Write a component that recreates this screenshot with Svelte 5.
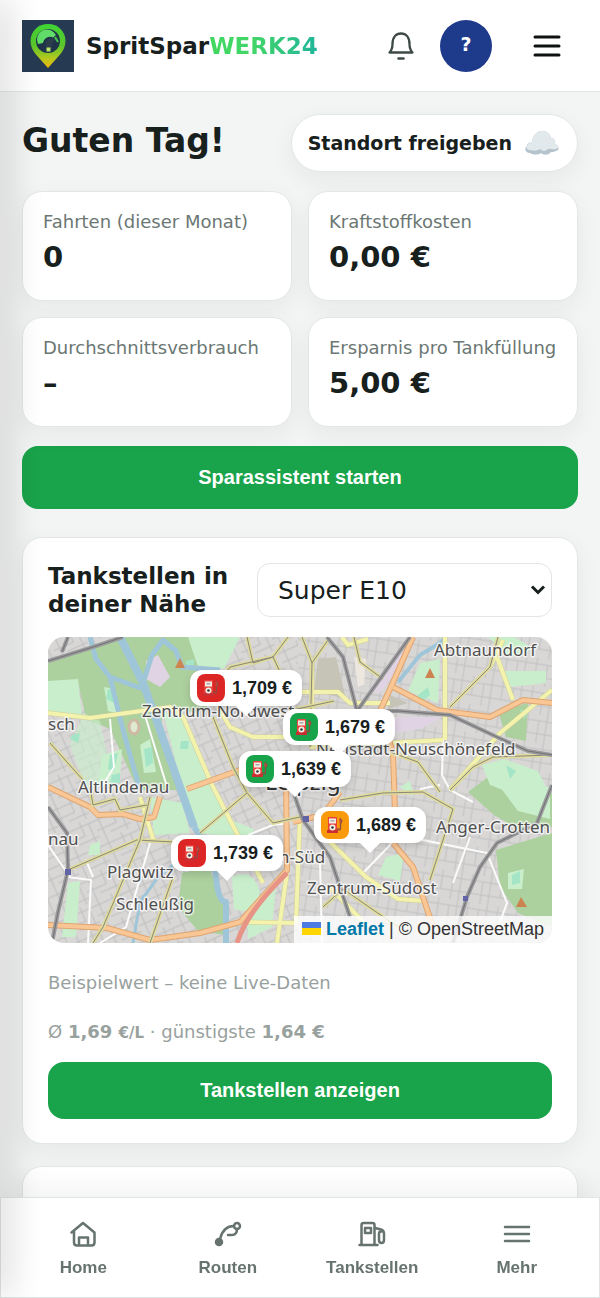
<script lang="ts">
	type Level = 'low' | 'mid' | 'high';

	const stats = [
		{ label: 'Fahrten (dieser Monat)', value: '0' },
		{ label: 'Kraftstoffkosten', value: '0,00 €' },
		{ label: 'Durchschnittsverbrauch', value: '–' },
		{ label: 'Ersparnis pro Tankfüllung', value: '5,00 €' }
	];

	// Pin tips, in the coordinate space of the map drawing
	const MAP_WIDTH = 504;
	const MAP_HEIGHT = 306;
	const stations: { price: string; level: Level; x: number; y: number }[] = [
		{ price: '1,709 €', level: 'high', x: 198, y: 79 },
		{ price: '1,679 €', level: 'low', x: 291, y: 118 },
		{ price: '1,639 €', level: 'low', x: 247, y: 160 },
		{ price: '1,689 €', level: 'mid', x: 322, y: 216 },
		{ price: '1,739 €', level: 'high', x: 179, y: 244 }
	];

	const fuels = ['Super E10', 'Super E5', 'Diesel'];
	let fuel = $state('Super E10');

	const rivers = [
		{ d: 'M72 0 95 46 112 93 132 150 146 190', w: 8 },
		{ d: 'M42 0 48 22 62 40 95 52M62 40 75 93 92 153', w: 5 },
		{ d: 'M95 46 104 18 115 3 128 14 134 30 172 33', w: 5 },
		{ d: 'M146 190Q166 215 168 240T178 265V306', w: 6 },
		{ d: 'M85 306 92 265 108 243 128 225', w: 3 },
		{ d: 'M350 45 372 18 392 6 398 0', w: 4 }
	];

	const mainRoads = [
		'M0 150 42 170 50 178 75 177 92 182 106 180 112 160',
		'M0 288 59 291 102 303 152 296 192 285 239 233 238 143',
		'M365 0 342 52 332 74 345 116 347 176M345 206 365 230 375 260 385 290',
		'M345 50 389 73 442 80 475 63 504 66',
		'M245 130 192 133 139 152M245 185 275 178 292 155'
	];

	const yellowRoads = [
		'M0 76 42 81 122 70 135 80 165 150 182 183 215 246',
		'M170 70 182 90 205 100 239 100 262 92',
		'M239 236 229 306M189 285 250 286M252 178 248 286',
		'M242 55H290L302 66 342 66M264 26V73',
		'M397 0V103M449 20 465 63M442 30 455 3',
		'M282 205 318 240 350 262 378 264M282 250 320 290',
		'M402 153 452 96 504 53M262 110 340 106 395 103',
		'M92 160 106 205M294 0 300 8 320 2'
	];

	const tramLines = [
		'M2 106 35 143M165 80 185 130 199 156 225 186 252 180',
		'M152 196 199 156M20 233 89 203 125 205',
		'M102 160 92 203 55 290 45 306M125 240 102 306',
		'M199 0 205 26 225 20 242 56M225 20 240 0M225 20 182 30 172 44',
		'M254 0 264 26 280 3M306 0 312 25 335 42M264 26 262 110',
		'M292 163 335 156 375 155 405 172 382 243',
		'M402 70 442 30 450 0M402 153 425 130 445 120 504 118',
		'M42 150 45 168 67 162 72 173 99 168M286 64 240 74',
		'M275 270 295 252 350 290M342 115 370 125 392 155'
	];

	const whiteRoads = [
		'M62 82 66 130 52 153M96 75 120 153',
		'M342 200 375 203 439 216 459 266 452 285',
		'M422 200 405 246M315 236 345 205',
		'M0 208 22 240M20 240 43 243 40 306M45 240 38 223M102 206 78 290 52 306',
		'M395 103 394 138 402 153 425 165M372 152 392 148',
		'M200 198 225 188 242 186M272 225 274 306'
	];

	const rails = [
		'M279 0 295 20 309 74 362 0',
		'M309 74 350 74 402 78 449 100 480 114 504 118',
		'M0 24 45 10 75 0M14 15 20 0',
		'M0 170 19 196 20 233 10 275 4 306',
		'M240 140 255 183 282 220 302 280',
		'M504 148 489 186 449 206 432 230 419 260 405 306'
	];

	const labels = [
		{ text: 'Abtnaundorf', x: 386, y: 19 },
		{ text: 'Zentrum-Nordwest', x: 94, y: 80 },
		{ text: 'sch', x: 0, y: 93 },
		{ text: 'Neustadt-Neuschönefeld', x: 268, y: 118 },
		{ text: 'Altlindenau', x: 30, y: 156 },
		{ text: 'nau', x: 0, y: 208 },
		{ text: 'Anger-Crotten', x: 388, y: 196 },
		{ text: 'Zentrum-Süd', x: 172, y: 226 },
		{ text: 'Plagwitz', x: 59, y: 241 },
		{ text: 'Zentrum-Südost', x: 259, y: 257 },
		{ text: 'Schleußig', x: 68, y: 273 }
	];
</script>

<div class="page">
	<header class="topbar">
		<a class="brand" href="#home">
			<svg class="logo" viewBox="0 0 52 52" aria-hidden="true">
				<defs>
					<linearGradient id="pin" x1="0" y1="0" x2="0" y2="1">
						<stop offset="0" stop-color="#3fd435" />
						<stop offset="0.5" stop-color="#5bc62c" />
						<stop offset="0.8" stop-color="#b9c81d" />
						<stop offset="1" stop-color="#f3b30b" />
					</linearGradient>
				</defs>
				<rect width="52" height="52" fill="#263b52" />
				<path
					d="M26 4C16 4 8.500 11.500 8.500 21c0 5 2 9 5 13L26 48l12.500-14c3-4 5-8 5-13C43.500 11.500 36 4 26 4Z"
					fill="url(#pin)"
				/>
				<circle cx="26" cy="21" r="12" fill="#203449" />
				<path d="M16 24a10 10 0 0 1 18-9l-3 2.500a7 7 0 0 0-10 5.500Z" fill="#62dc68" />
				<path d="M24 22a4 4 0 0 1 5-3l7-1-6 5v6h-6Z" fill="#2b3d4d" />
				<path d="m33 17 3 5" stroke="#46c84c" stroke-width="2" />
				<path d="M24.500 27.500h4v4h-4Z" fill="#b7e464" />
			</svg>
			<span class="brand-name">SpritSpar<span class="accent">WERK24</span></span>
		</a>
		<div class="actions">
			<button class="icon-button" aria-label="Benachrichtigungen">
				<svg width="28" height="30" viewBox="0 0 28 30" fill="none" stroke="currentColor">
					<path
						d="M2.500 21.500c2-2 3-4 3-8.500C5.500 6 9 2.500 14 2.500S22.500 6 22.500 13c0 4.500 1 6.500 3 8.500Z"
						stroke-width="2.300"
						stroke-linejoin="round"
					/>
					<path d="M11.500 27.500h5" stroke-width="2.500" stroke-linecap="round" />
				</svg>
			</button>
			<button class="help" aria-label="Hilfe">?</button>
			<button class="icon-button menu" aria-label="Menü">
				<svg width="28" height="24" viewBox="0 0 28 24" stroke="currentColor" stroke-width="3" stroke-linecap="round">
					<path d="M2 3h24M2 12h24M2 21h24" />
				</svg>
			</button>
		</div>
	</header>

	<main>
		<div class="greeting">
			<h1>Guten Tag!</h1>
			<button class="location">
				Standort freigeben
				<svg width="36" height="26" viewBox="0 0 36 26" aria-hidden="true">
					<path
						d="M6 23c-5 0-6-5-3-7 0-3 3-4 5-4 1-7 5-11 10-11s8 3 9 7c3 0 5 3 4 6 4 1 5 6 1 7-2 1-4 1-5 1-3 4-8 3-10 1-3 2-7 2-11 0Z"
						fill="#b4c3cc"
					/>
					<path
						d="M6 20c-3 0-4-2-3-4 1-3 3-4 5-4 1-7 5-11 10-11s8 3 9 7c3 0 5 3 4 6 4 1 4 4 1 5-3 1-6-1-8 0-3 3-6 2-8 0-3 2-6 2-10 1Z"
						fill="#e2e9ed"
					/>
				</svg>
			</button>
		</div>

		<div class="stats">
			{#each stats as stat}
				<section class="stat">
					<span class="stat-label">{stat.label}</span>
					<strong class="stat-value">{stat.value}</strong>
				</section>
			{/each}
		</div>

		<button class="primary start">Sparassistent starten</button>

		<section class="card">
			<div class="card-head">
				<h2><label for="fuel">Tankstellen in deiner Nähe</label></h2>
				<div class="select">
					<select id="fuel" bind:value={fuel}>
						{#each fuels as option}
							<option>{option}</option>
						{/each}
					</select>
					<svg width="16" height="12" viewBox="0 0 16 12" fill="none" stroke="currentColor" stroke-width="3">
						<path d="m2 2.500 6 6 6-6" />
					</svg>
				</div>
			</div>

			<div class="map">
				<svg class="tiles" viewBox="0 0 {MAP_WIDTH} {MAP_HEIGHT}" preserveAspectRatio="xMidYMid slice">
					<defs>
						<pattern id="streets" width="34" height="26" patternUnits="userSpaceOnUse" patternTransform="rotate(-24)">
							<path d="M0 5h34M0 15h21M12 21h22M6 0v26M21 0v15M29 5v21" stroke="#bdbdbe" fill="none" />
						</pattern>
						<pattern id="streets-east" width="30" height="28" patternUnits="userSpaceOnUse" patternTransform="rotate(9)">
							<path d="M0 6h30M0 19h30M7 0v19M18 6v22M26 0v28" stroke="#c0c0c1" fill="none" />
						</pattern>
					</defs>
					<rect width="504" height="306" fill="#d9d7d6" />
					<rect width="250" height="306" fill="url(#streets)" />
					<rect x="250" width="254" height="306" fill="url(#streets-east)" />

					<!-- Parks and forest -->
					<g fill="#add19e">
						<path d="M0 26 40 11 78 0H174L168 36 176 60 148 76 116 70 112 95 130 153H90L75 120 62 92 38 82 30 44 0 44Z" />
						<path d="M134 236 160 230 176 262 178 298 150 294 130 270Z" />
						<path d="M448 213 504 196V290L470 276 452 250Z" />
						<path d="M420 155 440 140 470 148 486 160 504 156V190L470 192 446 178Z" />
						<path d="M450 74 480 66 478 104 458 100Z" />
					</g>
					<g fill="#c8eecb">
						<path d="M0 44 30 42 34 80 0 74Z" />
						<path d="M115 74 136 82 154 128 164 152 180 182 206 192 204 202 150 196 134 150Z" />
						<path d="M102 160 134 166 142 196 106 198Z" />
						<path d="M56 50 66 52 74 78 60 74ZM92 108 102 102 108 135 96 136ZM54 118 74 112 72 140 50 148Z" />
						<path d="M36 76 52 84 66 150 38 150 22 108Z" opacity=".6" />
						<path d="M184 240Q204 230 212 254 208 280 186 272ZM20 246 32 244 28 300 14 300Z" />
						<path d="M140 0H192L176 32 150 30Z" />
						<path d="M372 26 392 22 390 66 360 54ZM456 34H498V46L462 50ZM440 0H466L486 12 462 20Z" />
						<path d="M434 128 456 122 490 134 498 150 468 158 442 148ZM338 220 356 216 352 244 330 238Z" />
						<path d="M452 150H502V182L470 174ZM460 236 476 232 474 252 460 252Z" />
						<path d="M352 150 362 144 366 160ZM42 208 52 204 52 218 40 218ZM198 270 228 250 224 290 200 302Z" />
					</g>
					<g fill="#a3e5c6">
						<path d="M60 52 68 54 66 66 58 62ZM96 112 104 110 105 126 98 130ZM62 118 70 116 66 134 60 132Z" />
						<path d="M133 104 141 104 140 112 132 112ZM24 98 32 96 30 106 22 102ZM64 138 72 136 72 146 62 146Z" />
						<path d="M368 60 380 50 382 58 372 66ZM464 238 472 234 472 246 464 248ZM138 24 146 22 146 28 138 28Z" />
						<path d="M472 72 480 76 476 82ZM458 128 468 134 462 142Z" />
					</g>
					<g fill="#e0d3e3">
						<path d="M98 24 110 18 122 40 112 50 98 42Z" />
						<path d="M346 80H394L372 92 346 96ZM354 12 362 16 332 56 320 54Z" />
					</g>
					<path d="M270 22 288 20 298 62 266 54ZM342 58 360 66 340 72Z" fill="#c6c4b6" />
					<path d="M306 20 318 22 316 48 310 50Z" fill="#eee7df" />

					{#each rivers as river}
						<path d={river.d} fill="none" stroke="#9fc5d9" stroke-width={river.w} stroke-linejoin="round" />
					{/each}
					{#each whiteRoads as d}
						<path {d} fill="none" stroke="#fbfbfb" stroke-width="2" />
					{/each}
					{#each yellowRoads as d}
						<path {d} fill="none" stroke="#cfce9a" stroke-width="5" />
						<path {d} fill="none" stroke="#f3f3ad" stroke-width="4" />
					{/each}
					{#each mainRoads as d}
						<path {d} fill="none" stroke="#dfa571" stroke-width="6" stroke-linejoin="round" />
						<path {d} fill="none" stroke="#f8c795" stroke-width="4" stroke-linejoin="round" />
					{/each}
					<path d="M189 306Q198 276 239 236" fill="none" stroke="#e79486" stroke-width="5" />
					{#each tramLines as d}
						<path {d} fill="none" stroke="#dedb9c" stroke-width="4" />
						<path {d} fill="none" stroke="#8a877a" stroke-width="1" />
					{/each}
					{#each rails as d}
						<path {d} fill="none" stroke="#9a9a9c" stroke-width="4" />
						<path {d} fill="none" stroke="#727276" stroke-width="1" />
					{/each}
					<ellipse cx="86" cy="90" rx="5" ry="7" fill="#dfe9cf" stroke="#cdb9a4" stroke-width="3" />
					<path d="M127 31 132 21 137 31ZM377 41 382 31 387 41ZM468 270 473 260 479 270Z" fill="#cd8350" />
					<path d="M17 232h6v6h-6ZM415 259h5v5h-5ZM255 179h6v6h-6Z" fill="#6264a6" />

					{#each labels as label}
						<text class="place" x={label.x} y={label.y}>{label.text}</text>
					{/each}
					<text class="place city" x="217" y="153">Leipzig</text>
				</svg>

				{#each stations as station}
					<button
						class="pin"
						style="left: {(station.x / MAP_WIDTH) * 100}%; top: {(station.y / MAP_HEIGHT) * 100}%"
					>
						<span class="badge {station.level}">
							<svg width="16" height="18" viewBox="0 0 16 18" aria-hidden="true">
								<path d="M1 2Q1 1 2 1h7q1 0 1 1v13H1Z" fill="#e8423c" />
								<path d="M0 14h11v3H0Z" fill="#c92f32" />
								<path d="M2 2.500h7v5H2Z" fill="#f1eee6" />
								<path d="M3.500 4h4v1.500h-4Z" fill="#a7aaa8" />
								<circle cx="5.500" cy="11.500" r="3" fill="#f4f1e8" />
								<circle cx="5.500" cy="11.500" r="1.300" fill="#34373a" />
								<path d="M10 13h1.500q1 2 2 0V8L15 5l-2-3" fill="none" stroke="#8b4c43" stroke-width="1.300" />
								<path d="m12 3 3 2-2 3Z" fill="#bf4a3e" />
							</svg>
						</span>
						{station.price}
					</button>
				{/each}

				<div class="attribution">
					<svg width="19" height="13" viewBox="0 0 19 13" aria-hidden="true">
						<path fill="#4c7be1" d="M0 0h19v7H0z" />
						<path fill="#ffd500" d="M0 6h19v7H0z" />
					</svg>
					<a href="#leaflet">Leaflet</a> | © OpenStreetMap
				</div>
			</div>

			<p class="note">Beispielwert – keine Live-Daten</p>
			<p class="note">Ø <b>1,69 <small>€/L</small></b> · günstigste <b>1,64 €</b></p>
			<button class="primary show">Tankstellen anzeigen</button>
		</section>

		<section class="card history">
			<h2>Sparverlauf</h2>
		</section>
	</main>

	<nav class="tabs">
		<a href="#home">
			<svg viewBox="0 0 28 28">
				<path d="M2.500 12.500 14 3l11.500 9.500V22.500Q25.500 25.500 22.500 25.500H8Q5 25.500 5 22.500V11" />
				<path d="M10 25v-7.500h9V25" />
			</svg>
			Home
		</a>
		<a href="#routen">
			<svg viewBox="0 0 28 28">
				<circle cx="5" cy="22" r="3" fill="currentColor" />
				<circle cx="23" cy="6" r="3" />
				<path d="M6 19C8 11 12 6 20 6M23 9c0 4-2 6-5 6h-4" />
			</svg>
			Routen
		</a>
		<a href="#tankstellen">
			<svg viewBox="0 0 28 28">
				<path d="M3.500 25V5Q3.500 3 5.500 3h9q2 0 2 2v20M1.500 25h18" />
				<path d="M7 8h6v5H7ZM17 8l6 1.500q3 1 3 4V20q0 3-2.500 3T21 20v-6.500q0-2 2.500-2" />
			</svg>
			Tankstellen
		</a>
		<a href="#mehr">
			<svg viewBox="0 0 28 28"><path d="M2 7h24M2 14h24M2 21h24" /></svg>
			Mehr
		</a>
	</nav>
	<div class="drawer-shadow"></div>
</div>

<style>
	:global(body) {
		background: #f3f5f4;
	}

	.page {
		height: 100vh;
		overflow: hidden;
		font-family: 'DejaVu Sans', sans-serif;
		color: #17201d;
	}

	button,
	select {
		font: inherit;
		color: inherit;
		border: 0;
		margin: 0;
		padding: 0;
		cursor: pointer;
	}

	a {
		color: inherit;
		text-decoration: none;
	}

	h1,
	h2,
	p {
		margin: 0;
	}

	.topbar {
		display: flex;
		align-items: center;
		justify-content: space-between;
		height: 91px;
		padding: 0 22px;
		background: #fff;
		border-bottom: 1px solid #e2e6e5;
	}

	.brand {
		display: flex;
		align-items: center;
		gap: 12px;
	}

	.logo {
		width: 52px;
		height: 52px;
	}

	.brand-name {
		font-size: 23px;
		font-weight: 700;
	}

	.accent {
		background: linear-gradient(90deg, #3fd85f, #43d568 40%, #1fb59b);
		background-clip: text;
		color: transparent;
	}

	.actions {
		display: flex;
		align-items: center;
		padding-right: 11px;
	}

	.icon-button {
		display: grid;
		place-items: center;
		width: 52px;
		height: 52px;
		background: none;
		color: #3e4a46;
	}

	.help {
		width: 52px;
		height: 52px;
		margin: 0 35px 0 13px;
		padding-bottom: 3px;
		border-radius: 50%;
		background: #1e3a8a;
		color: #fff;
		font-size: 19px;
		font-weight: 700;
	}

	.menu {
		width: 40px;
		color: #0d1210;
	}

	main {
		padding: 22px;
	}

	.greeting {
		display: flex;
		align-items: center;
		justify-content: space-between;
		margin-bottom: 19px;
	}

	h1 {
		font-size: 33px;
		line-height: 40px;
		padding-bottom: 4px;
	}

	.location {
		display: flex;
		align-items: center;
		gap: 12px;
		height: 58px;
		padding: 0 17px 0 16px;
		border: 1px solid #e2e7e5;
		border-radius: 29px;
		background: #fff;
		box-shadow: 0 8px 24px rgba(20, 35, 30, 0.06);
		font-size: 19px;
		font-weight: 700;
	}

	.stats {
		display: grid;
		grid-template-columns: 1fr 1fr;
		gap: 16px;
	}

	.stat {
		display: flex;
		flex-direction: column;
		gap: 7px;
		height: 110px;
		padding: 18px 20px;
		box-sizing: border-box;
	}

	.stat,
	.card {
		border: 1px solid #e2e7e5;
		border-radius: 20px;
		background: #fff;
		box-shadow: 0 8px 24px rgba(20, 35, 30, 0.06);
	}

	.stat-label {
		font-size: 18px;
		line-height: 24px;
		color: #6b7773;
		white-space: nowrap;
	}

	.stat-value {
		font-size: 29px;
		line-height: 32px;
	}

	.primary {
		display: block;
		width: 100%;
		border-radius: 16px;
		background: #19a34a;
		color: #fff;
		font-family: 'Liberation Sans', sans-serif;
		font-size: 20px;
		font-weight: 700;
	}

	.start {
		height: 63px;
		margin: 19px 0 28px;
	}

	.show {
		height: 57px;
		margin-top: 15px;
	}

	.card {
		padding: 24px 25px;
		margin-bottom: 22px;
	}

	.history {
		padding-top: 28px;
	}

	.card-head {
		display: flex;
		align-items: center;
		justify-content: space-between;
		gap: 24px;
		margin-bottom: 19px;
	}

	h2 {
		flex: 1;
		font-size: 23px;
		line-height: 28px;
	}

	.select {
		position: relative;
		width: 295px;
	}

	.select svg {
		position: absolute;
		top: 21px;
		right: 6px;
		pointer-events: none;
	}

	select {
		display: block;
		appearance: none;
		width: 100%;
		height: 54px;
		padding: 0 28px 0 20px;
		box-sizing: border-box;
		border: 1px solid #e2e7e5;
		border-radius: 13px;
		background: #fff;
		font-size: 25px;
	}

	.map {
		position: relative;
		aspect-ratio: 504 / 306;
		margin-bottom: 26px;
		border-radius: 16px;
		overflow: hidden;
	}

	.tiles {
		display: block;
		width: 100%;
		height: 100%;
	}

	.place {
		font-family: 'Noto Sans', sans-serif;
		font-size: 17px;
		fill: #505050;
		stroke: rgba(255, 255, 255, 0.7);
		stroke-width: 3px;
		stroke-linejoin: round;
		paint-order: stroke;
	}

	.city {
		font-size: 23px;
		fill: #333;
	}

	/* The pin hangs above its point, with the tail touching it */
	.pin {
		position: absolute;
		display: flex;
		align-items: center;
		gap: 7px;
		height: 36px;
		padding: 0 10px 0 7px;
		border-radius: 12px;
		background: #fff;
		box-shadow: 0 3px 8px rgba(0, 0, 0, 0.15);
		transform: translate(-50%, -46px);
		font-family: 'Liberation Sans', sans-serif;
		font-size: 18px;
		font-weight: 700;
		line-height: 32px;
		white-space: nowrap;
	}

	.pin::after {
		content: '';
		position: absolute;
		top: 100%;
		left: 50%;
		margin-left: -10px;
		border: 10px solid transparent;
		border-top-color: #fff;
		border-bottom: 0;
	}

	.badge {
		display: grid;
		place-items: center;
		width: 28px;
		height: 28px;
		border-radius: 8px;
	}

	.low {
		background: #16a34a;
	}

	.mid {
		background: #f99a0b;
	}

	.high {
		background: #dc2626;
	}

	.attribution {
		position: absolute;
		right: 0;
		bottom: 0;
		padding: 0 8px;
		background: rgba(255, 255, 255, 0.8);
		color: #333;
		font-family: 'Liberation Sans', sans-serif;
		font-size: 18px;
		line-height: 27px;
	}

	.attribution a {
		color: #0078a8;
		font-weight: 700;
	}

	.note {
		color: #98a19e;
		font-size: 18px;
		line-height: 27px;
	}

	.note + .note {
		margin-top: 22px;
	}

	.note small {
		font-size: 15px;
	}

	.tabs {
		position: fixed;
		left: 0;
		right: 0;
		bottom: 0;
		display: grid;
		grid-template-columns: repeat(4, 1fr);
		height: 101px;
		padding: 2px 10px 0;
		box-sizing: border-box;
		border: 1px solid #e0e5e3;
		background: #fff;
		box-shadow: 0 -8px 28px rgba(20, 35, 30, 0.06);
		color: #66736f;
		font-family: 'Liberation Sans', sans-serif;
		font-size: 17px;
		font-weight: 700;
	}

	.tabs a {
		display: flex;
		flex-direction: column;
		align-items: center;
		justify-content: center;
		gap: 10px;
	}

	.tabs svg {
		width: 28px;
		height: 28px;
		fill: none;
		stroke: currentColor;
		stroke-width: 2.5;
		stroke-linecap: round;
		stroke-linejoin: round;
	}

	/* Edge of the closed side menu */
	.drawer-shadow {
		position: fixed;
		top: 0;
		bottom: 0;
		left: -20px;
		width: 20px;
		box-shadow: 6px 0 36px rgba(0, 0, 0, 0.2);
		pointer-events: none;
	}
</style>
